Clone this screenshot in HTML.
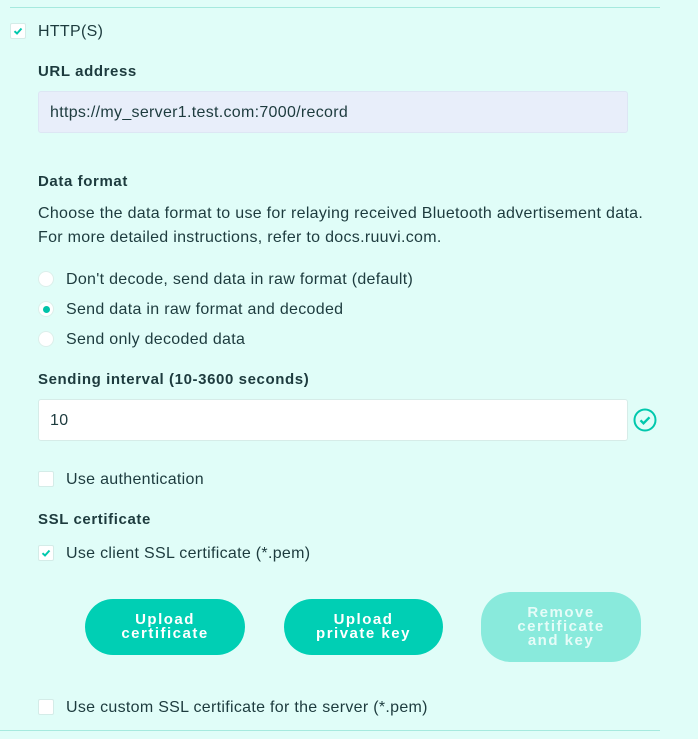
<!DOCTYPE html>
<html><head><style>
body{margin:0;width:698px;height:739px;background:#e0fdf8;font-family:"Liberation Sans",sans-serif;color:#1d3b3e;position:relative;overflow:hidden;font-size:16px;letter-spacing:0.3px}
.a{position:absolute;white-space:nowrap}
.hr{position:absolute;height:1px;background:#a6e9de}
.cb{position:absolute;width:14px;height:14px;background:#fff;border:1px solid #d4ece8;border-radius:2px}
.cb svg{position:absolute;left:2px;top:2px}
.rd{position:absolute;width:16px;height:16px;border-radius:50%;background:#fff;border:1px solid #dcefeb;box-sizing:border-box}
.b{font-weight:bold;font-size:15px;letter-spacing:0.6px}
.inp{position:absolute;left:38px;width:590px;height:42px;box-sizing:border-box;border-radius:3px;padding:0 11px;line-height:42px}
.btn{position:absolute;border-radius:30px;background:#00cfb4;color:#fff;font-weight:bold;font-size:15px;letter-spacing:1.5px;text-align:center;line-height:14px;display:flex;align-items:center;justify-content:center}
</style></head><body>
<div class="hr" style="left:10px;top:7px;width:650px"></div>
<div class="cb" style="left:10px;top:23px"><svg width="10" height="10" viewBox="0 0 10 10"><path d="M1.5 5.2L4 7.5 8.5 2.5" stroke="#00c8ad" stroke-width="2" fill="none"/></svg></div>
<div class="a" style="left:38px;top:23px">HTTP(S)</div>
<div class="a b" style="left:38px;top:63px">URL address</div>
<div class="inp" style="top:91px;background:#e8eefa;border:1px solid #dde6f4">https://my_server1.test.com:7000/record</div>
<div class="a b" style="left:38px;top:173px">Data format</div>
<div class="a" style="left:38px;top:202px;line-height:24px">Choose the data format to use for relaying received Bluetooth advertisement data.<br>For more detailed instructions, refer to docs.ruuvi.com.</div>
<div class="rd" style="left:38px;top:271px"></div><div class="a" style="left:66px;top:271px">Don't decode, send data in raw format (default)</div>
<div class="rd" style="left:38px;top:301px"><div style="position:absolute;left:4px;top:4px;width:7px;height:7px;border-radius:50%;background:#00c3a9"></div></div><div class="a" style="left:66px;top:301px">Send data in raw format and decoded</div>
<div class="rd" style="left:38px;top:331px"></div><div class="a" style="left:66px;top:331px">Send only decoded data</div>
<div class="a b" style="left:38px;top:371px">Sending interval (10-3600 seconds)</div>
<div class="inp" style="top:399px;background:#fff;border:1px solid #d6ece8">10</div>
<svg class="a" style="left:633px;top:408px" width="24" height="24" viewBox="0 0 24 24"><circle cx="12" cy="12" r="10.5" stroke="#00c8ad" stroke-width="2" fill="none"/><path d="M7.5 12.3l3 3 6-6" stroke="#00c8ad" stroke-width="2.4" fill="none"/></svg>
<div class="cb" style="left:38px;top:471px"></div><div class="a" style="left:66px;top:471px">Use authentication</div>
<div class="a b" style="left:38px;top:511px">SSL certificate</div>
<div class="cb" style="left:38px;top:545px"><svg width="10" height="10" viewBox="0 0 10 10"><path d="M1.5 5.2L4 7.5 8.5 2.5" stroke="#00c8ad" stroke-width="2" fill="none"/></svg></div><div class="a" style="left:66px;top:545px">Use client SSL certificate (*.pem)</div>
<div class="btn" style="left:85px;top:599px;width:160px;height:56px">Upload<br>certificate</div>
<div class="btn" style="left:284px;top:599px;width:159px;height:56px">Upload<br>private key</div>
<div class="btn" style="left:481px;top:592px;width:160px;height:70px;background:#89eadc;color:#e6fcf8">Remove<br>certificate<br>and key</div>
<div class="cb" style="left:38px;top:699px"></div><div class="a" style="left:66px;top:699px">Use custom SSL certificate for the server (*.pem)</div>
<div class="hr" style="left:0;top:730px;width:660px"></div>
</body></html>
